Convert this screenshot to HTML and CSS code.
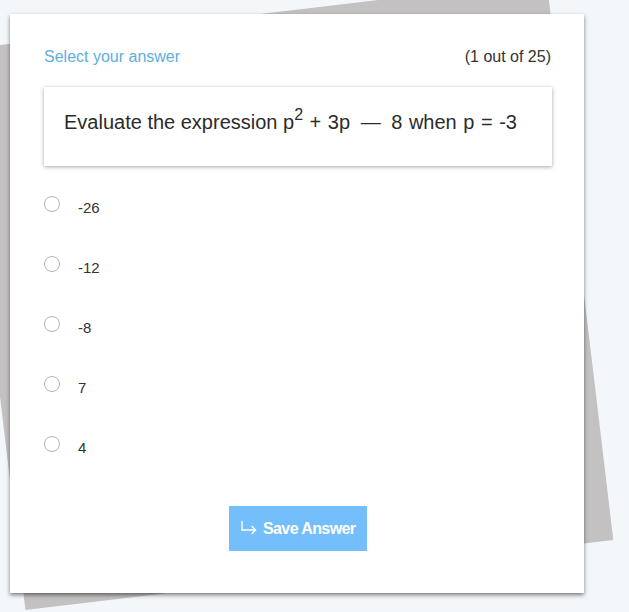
FILE: index.html
```html
<!DOCTYPE html>
<html>
<head>
<meta charset="utf-8">
<link rel="stylesheet" href="styles.css">
</head>
<body>
<div class="stage">
  <div class="paper-back"></div>
  <div class="card">
    <div class="head">
      <span class="prompt">Select your answer</span>
      <span class="count">(1 out of 25)</span>
    </div>
    <div class="question">Evaluate the expression p<sup>2</sup><span class="tail"> + 3p <span class="dash">—</span> 8 when p = -3</span></div>
    <ul class="options">
      <li class="option"><span class="radio"></span><span class="label">-26</span></li>
      <li class="option"><span class="radio"></span><span class="label">-12</span></li>
      <li class="option"><span class="radio"></span><span class="label">-8</span></li>
      <li class="option"><span class="radio"></span><span class="label">7</span></li>
      <li class="option"><span class="radio"></span><span class="label">4</span></li>
    </ul>
    <div class="actions">
      <button class="save">
        <svg class="save-icon" width="17" height="15" viewBox="0 0 17 15" fill="none" stroke="#ffffff" stroke-width="1.4" stroke-linecap="round" stroke-linejoin="round">
          <path d="M2 1.5 V10 H15.5"/>
          <path d="M12 6.5 L15.5 10 L12 13.5"/>
        </svg>
        <span>Save Answer</span>
      </button>
    </div>
  </div>
</div>
</body>
</html>
```
FILE: styles.css
```css
html, body {
  margin: 0;
  padding: 0;
}
body {
  background: #f4f7fa;
  font-family: "Liberation Sans", Arial, sans-serif;
  color: #333;
  overflow: hidden;
}
.stage {
  position: relative;
  width: 629px;
  height: 612px;
  padding: 14px 0 0 10px;
  box-sizing: border-box;
}
.paper-back {
  position: absolute;
  left: -10px;
  top: 13px;
  width: 592px;
  height: 564px;
  background: #c3c1c2;
  transform: rotate(-6.8deg);
}
.card {
  position: relative;
  width: 574px;
  height: 579px;
  box-sizing: border-box;
  background: #fff;
  padding: 34px 32px 0 34px;
  box-shadow: 0 2px 4px rgba(0,0,0,0.5);
  display: flex;
  flex-direction: column;
}
.head {
  display: flex;
  justify-content: space-between;
  align-items: center;
  height: 18px;
  font-size: 16px;
  line-height: 18px;
}
.prompt {
  color: #5eaee0;
}
.count {
  color: #333;
  padding-right: 1px;
}
.question {
  margin-top: 21px;
  height: 79px;
  box-sizing: border-box;
  padding: 23px 20px 0 20px;
  font-size: 20px;
  line-height: 24px;
  color: #2b2b2b;
  background: #fff;
  box-shadow: 0 1px 4px rgba(0,0,0,0.35);
}
.question sup {
  font-size: 16px;
  line-height: 0;
  vertical-align: 9px;
}
.tail {
  word-spacing: 1px;
}
.dash {
  margin: 0 4px;
}
.options {
  list-style: none;
  margin: 9px 0 0 0;
  padding: 0;
}
.option {
  height: 60px;
  display: flex;
  align-items: center;
}
.radio {
  width: 16px;
  height: 16px;
  box-sizing: border-box;
  border: 1px solid #b3b3b3;
  border-radius: 50%;
  background: #fff;
  margin-top: -3px;
}
.label {
  margin-left: 18px;
  font-size: 15px;
  color: #333;
  margin-top: 4px;
}
.actions {
  display: flex;
  justify-content: center;
  margin-top: 31px;
}
.save {
  display: flex;
  align-items: center;
  gap: 6px;
  height: 45px;
  width: 138px;
  box-sizing: border-box;
  padding: 0 0 0 11px;
  border: none;
  background: #75befc;
  color: #fff;
  font-family: "Liberation Sans", Arial, sans-serif;
  font-weight: bold;
  font-size: 16px;
  letter-spacing: -0.6px;
}
.save-icon {
  margin-top: -3px;
}
```
